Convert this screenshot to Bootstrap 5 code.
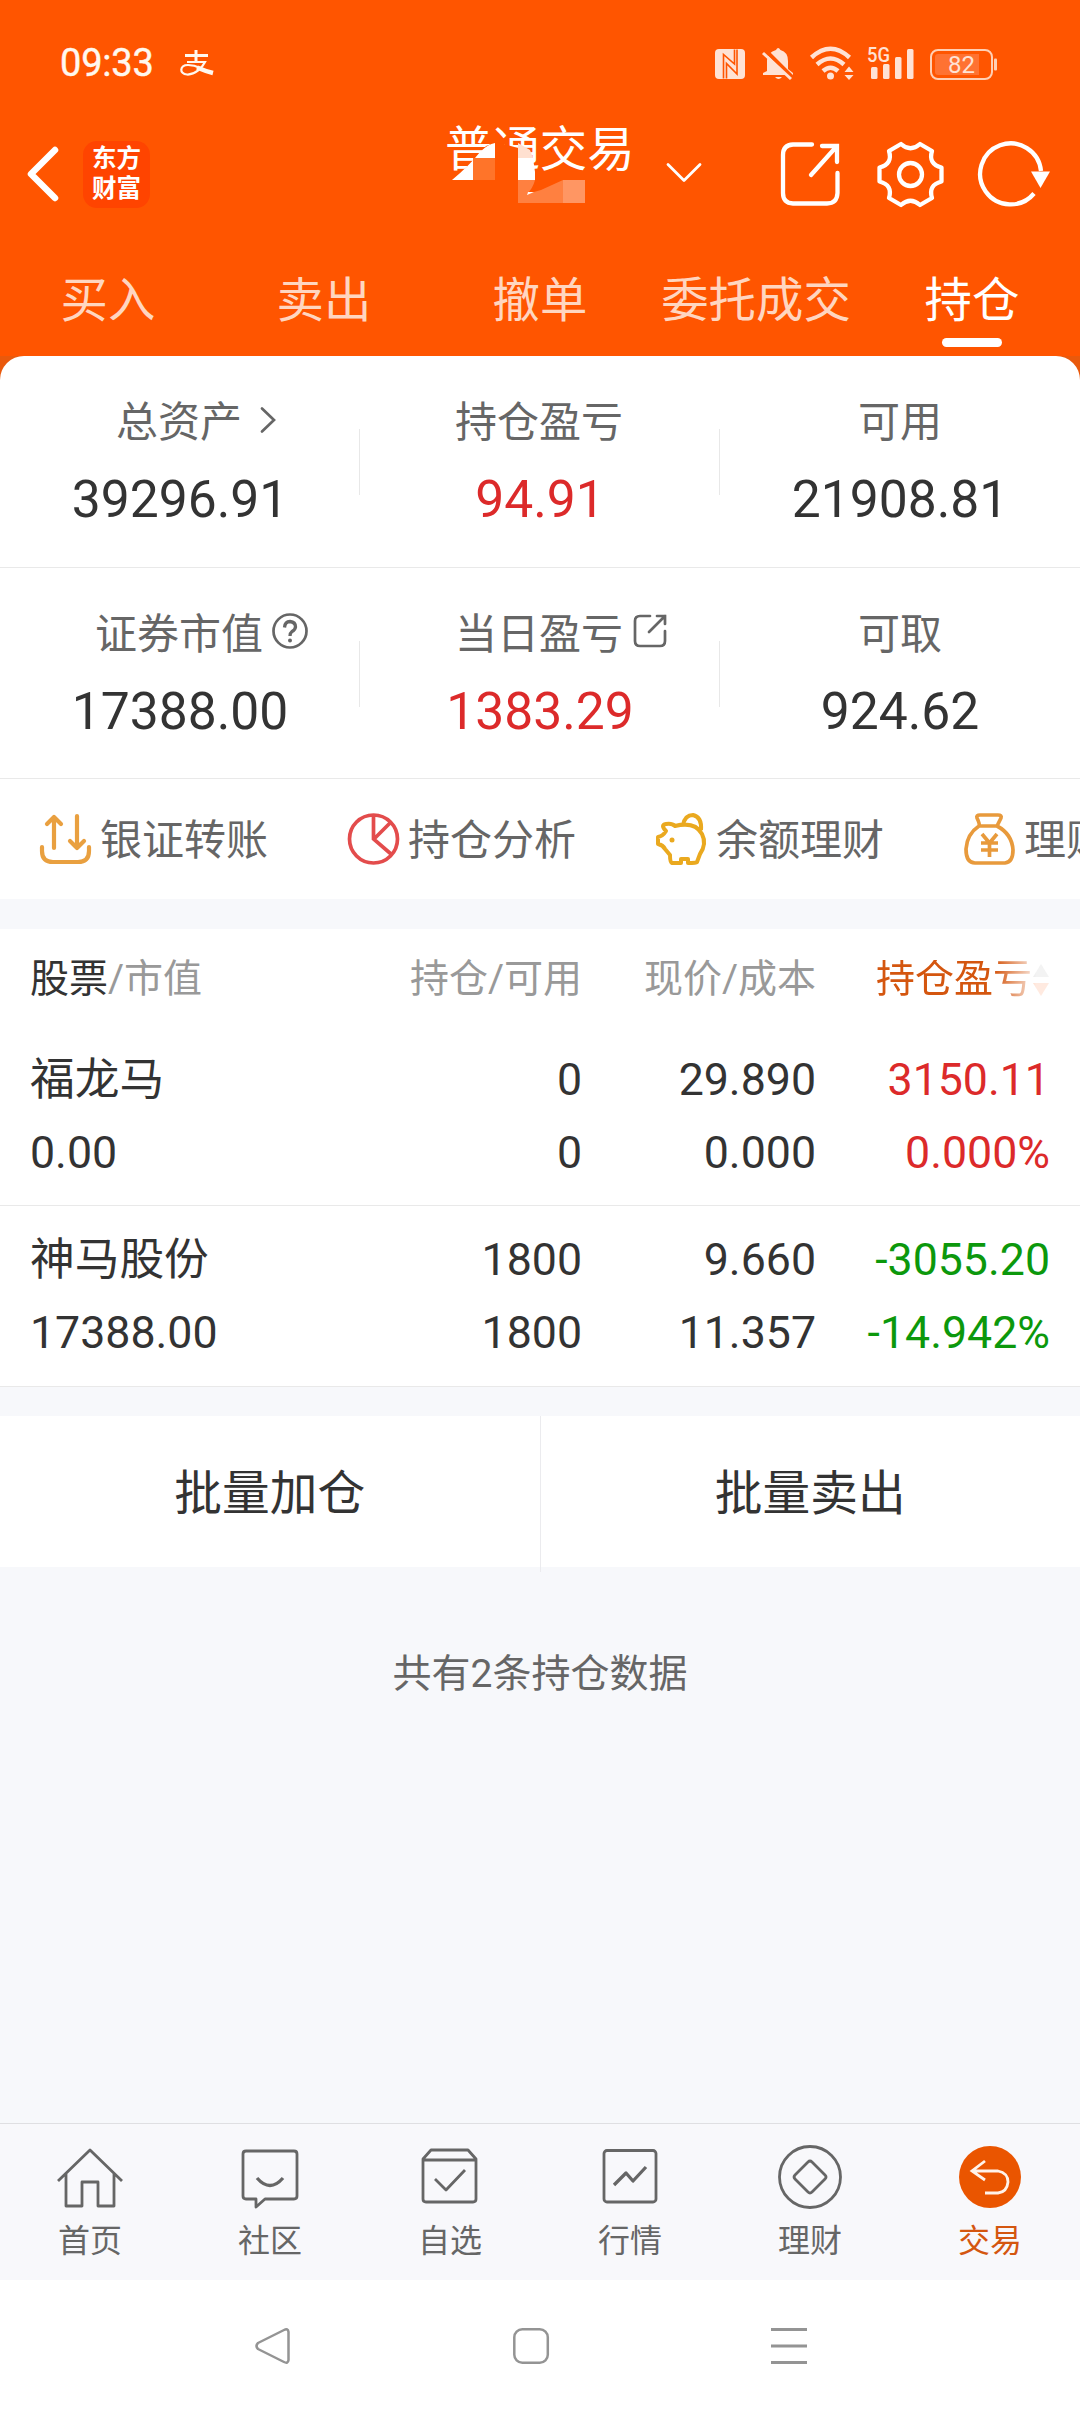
<!DOCTYPE html>
<html lang="zh-CN">
<head>
<meta charset="utf-8">
<meta name="viewport" content="width=device-width, initial-scale=1">
<title>普通交易 - 持仓</title>
<link rel="stylesheet" href="https://cdn.jsdelivr.net/npm/bootstrap@5.3.0/dist/css/bootstrap.min.css">
<style>
  body { font-family: Roboto, "Noto Sans CJK SC", sans-serif; color: #333; background: #f7f8fb; min-height: 2412px; line-height: 1; overflow-x: hidden; }
  svg { display: block; flex: none; overflow: visible; }
  .app { height: 2412px; overflow: hidden; }
  .topbar { background: #ff5500; height: 356px; color: #fff; }
  .status { height: 126px; padding: 0 84px 0 60px; }
  .clock { font-size: 38px; font-weight: 400; -webkit-text-stroke: .4px; width: 120px; letter-spacing: -.2px; color: #fff8ef; }
  .titlebar { height: 96px; padding: 0 28px 0 27px; }
  .brand-tile { width: 67px; height: 67px; border-radius: 14px; background: #ff4400; font-size: 24.5px; font-weight: 700; line-height: 30px; margin-left: 25px; }
  .title-box { width: 190px; height: 96px; font-size: 47.4px; line-height: 49px; }
  .tabs .tab { font-size: 47.4px; line-height: 159px; height: 134px; color: #ffd6c0; white-space: nowrap; }
  .tabs .tab.active { color: #fff; }
  .tab.active::after { content: ""; position: absolute; left: 50%; margin-left: -30px; bottom: 9px; width: 60px; height: 9px; border-radius: 5px; background: #fff; }
  .sheet-back { background: linear-gradient(#e9590c 0 40px, #fff 40px); }
  .sheet { background: #fff; border-radius: 24px 24px 0 0; }
  .stats { height: 211.5px; border-bottom: 1px solid #e9e9e9; }
  .stats .cell { height: 100%; padding-top: 35px; }
  .stats .cell + .cell::before { content: ""; position: absolute; left: -1px; top: 73px; height: 66px; width: 1px; background: #e8e8e8; }
  .cell-name { font-size: 42px; line-height: 63px; color: #666; }
  .cell-name > span { left: -1px; }
  .cell-num { font-size: 51.6px; line-height: 91px; }
  .hang { position: absolute; left: 100%; top: 50%; transform: translateY(calc(-50% - 3px)); }
  .up { color: #dc2a2a; }
  .down { color: #0c980c; }
  .quick { height: 120px; padding-left: 39px; font-size: 42px; color: #666; }
  .quick .item { width: 308px; gap: 8px; flex: none; white-space: nowrap; }
  .quick .item span { padding-top: 3px; }
  .band { height: 30px; background: #f7f8fb; }
  .holdings { background: #fff; padding-left: 30px; padding-right: 30px; font-size: 44.7px; text-align: right; }
  .holdings .c1 { width: 300px; text-align: left; }
  .holdings .c2 { width: 252px; }
  .holdings .c3 { width: 234px; }
  .holdings .c4 { width: 234px; white-space: nowrap; }
  .head { font-size: 39px; height: 100px; color: #999; }
  .head > div { padding-top: 1px; }
  .line-a, .line-b { line-height: 73px; }
  .hold-row { padding-top: 15px; height: 176px; }
  .hold-row.later { height: 180px; padding-top: 18px; }
  .rule { border-top: 1px solid #e9e9e9; }
  .sort-name { color: #d4560f; -webkit-mask-image: linear-gradient(90deg, #000 68%, rgba(0,0,0,.12) 92%); mask-image: linear-gradient(90deg, #000 68%, rgba(0,0,0,.12) 92%); width: 174px; }
  .batch { height: 151px; font-size: 47.7px; background: #fff; line-height: 156px; }
  .batch .half + .half { border-left: 1px solid #ebebee; }
  .note { font-size: 39px; color: #666; padding-top: 87px; line-height: 40px; }
  .dock { height: 157px; border-top: 1px solid #dfdfe2; background: #f8f8fb; font-size: 32px; color: #666; }
  .dock .slot { padding-top: 20px; }
  .dock .slot span { line-height: 42px; margin-top: 6px; }
  .dock .now { color: #d4560f; }
  .sysnav { height: 132px; background: #fff; padding: 0 273px 0 255px; }
</style>
</head>
<body>
<div class="app d-flex flex-column">
  <header class="topbar">
    <div class="status d-flex align-items-center">
      <div class="clock">09:33</div>
      <svg width="34" height="26" viewBox="0 0 34 26" fill="none" stroke="#fff8ef"><path d="M5 5.500H28M16 0V12" stroke-width="3"/><path d="M7 12H25C22 18 15 25 7 24.500C-1 24-.5 15 8 15C15 15 18 17 22 19" stroke-width="2.200"/><path d="M17 17.500Q25 21 33 23" stroke-width="4.500"/></svg>
      <svg class="ms-auto" width="281" height="38" viewBox="0 0 281 38" fill="#ffe2d4">
        <!-- nfc -->
        <rect y="5" width="30" height="30" rx="4"/>
        <path d="M8.500 34.500V10.500L19.500 20V5.500M11.500 34.500V19.500L22 30V5.500" fill="none" stroke="#ff5500" stroke-width="1.600"/>
        <!-- muted bell -->
        <path d="M52 27V16Q53 8 61 6Q63 2 65.500 6Q73 8 73 17V25L78 29V31H48V29Z"/><path d="M60 33H67Q63.500 37 60 33Z"/>
        <path d="M50 6L80 36" stroke="#ff5500" stroke-width="4"/><path d="M48 9L76 35" stroke="#ffe2d4" stroke-width="3"/>
        <!-- wifi -->
        <g fill="none" stroke="#ffe2d4" stroke-width="4.500"><path d="M96.500 13.500Q115.500-4 134.500 13.500M102 20.500Q115.500 8.500 129 20.500M108 27Q115.500 20.500 123 27"/></g>
        <circle cx="115.500" cy="32" r="3.500"/><path d="M129.500 28L134 22.500L138.500 28ZM129.500 31L134 36L138.500 31Z"/>
        <!-- signal -->
        <text x="152" y="17.500" font-size="19.500" font-weight="500" font-family="Roboto, sans-serif" textLength="23" lengthAdjust="spacingAndGlyphs">5G</text>
        <rect x="156" y="23" width="6.500" height="12" rx="1.500"/><rect x="168" y="20" width="6.500" height="15" rx="1.500"/><rect x="180" y="13" width="6.500" height="22" rx="1.500"/><rect x="192" y="5" width="6.500" height="30" rx="1.500"/>
        <!-- battery -->
        <rect x="216" y="6" width="61" height="29" rx="7" fill="none" stroke="#ffcfb4" stroke-width="2"/>
        <path d="M223 10H264V31H223Q220 31 220 28V13Q220 10 223 10Z" fill="#ff7232"/><rect x="279" y="14.500" width="3" height="12" rx="1" fill="#ffcfb4"/>
        <text x="246.500" y="29" font-size="24" text-anchor="middle" font-family="Roboto, sans-serif">82</text>
      </svg>
    </div>
    <div class="titlebar d-flex align-items-center position-relative">
      <svg width="31" height="54" viewBox="0 0 31 54" fill="none" stroke="#fff" stroke-width="6.500" stroke-linecap="round" stroke-linejoin="round"><path d="M28 3L4 27L28 51"/></svg>
      <div class="brand-tile d-flex flex-column align-items-center justify-content-center"><span>东方</span><span>财富</span></div>
      <div class="title-box position-absolute start-50 translate-middle-x">普通交易
        <svg class="position-absolute top-0 start-0" width="190" height="96" viewBox="445 126 190 96">
          <path d="M452 181L474 160L486 146L497 142L518 148V190H540V172H537V179H518V182H452Z" fill="#ff5500"/>
          <path d="M452 180Q470 165 480 152Q488 144 495 143V158H473V180Z" fill="#fff"/>
          <path d="M473 158H495V180H473Z" fill="#ff7429"/>
          <path d="M518 143L530 150L533 158H518Z" fill="#ffe0d0"/><path d="M518 158H533L535 172V180H518Z" fill="#fff"/>
          <path d="M518 180H535Q533 188 527 194L541 190L563 180V203H518Z" fill="#ff8040"/>
          <path d="M563 180H585V203H563Z" fill="#ff9663"/><path d="M528 192H534L527 195Z" fill="#fff"/>
        </svg>
      </div>
      <div class="ms-auto d-flex align-items-center">
        <svg width="36" height="20" viewBox="0 0 36 20" fill="none" stroke="#fff" stroke-width="2.800" stroke-linecap="round" stroke-linejoin="round"><path d="M2 .5L18 16.500L34 .5"/></svg>
        <svg style="margin-left:79px" width="59" height="64" viewBox="0 0 59 64" fill="none" stroke="#fff" stroke-width="4.300" stroke-linecap="round"><path d="M31 2.500H12Q2 3 2 13V51Q2 61 12 61.500H46Q56 61.500 56.500 51V31M41 4H56V20M56 4L30 33"/></svg>
        <svg style="margin-left:37px" width="67" height="67" viewBox="-33.500 -33.500 67 67" fill="none" stroke="#fff" stroke-width="4.300" stroke-linejoin="round"><path d="M31-7V7Q17.500 10.500 21.500 23.500L9.500 30.500Q0 22-9.500 30.500L-21.500 23.500Q-17.500 10.500-31 7V-7Q-17.500-10.500-21.500-23.500L-9.500-30.500Q0-22 9.500-30.500L21.500-23.500Q17.500-10.500 31-7Z"/><circle r="11.500"/></svg>
        <svg style="margin-left:35px" width="73" height="66" viewBox="0 0 73 66" fill="none" stroke="#fff" stroke-width="4.300"><path d="M55 52.500A30.500 30.500 0 1 1 62 30"/><path d="M52 30.500H71L61.500 47Z" fill="#fff" stroke="none"/></svg>
      </div>
    </div>
    <nav class="tabs row g-0 text-center">
      <div class="col tab">买入</div><div class="col tab">卖出</div><div class="col tab">撤单</div><div class="col tab">委托成交</div><div class="col tab active position-relative">持仓</div>
    </nav>
  </header>

  <div class="sheet-back">
    <section class="sheet">
      <div class="stats row g-0 text-center">
        <div class="col cell position-relative"><div class="cell-name"><span class="position-relative">总资产<svg class="hang" style="margin-left:18px" width="16" height="27" viewBox="0 0 16 27" fill="none" stroke="#666" stroke-width="2.700" stroke-linecap="round"><path d="M2 2L14 13.500L2 25"/></svg></span></div><div class="cell-num">39296.91</div></div>
        <div class="col cell position-relative"><div class="cell-name"><span class="position-relative">持仓盈亏</span></div><div class="cell-num up">94.91</div></div>
        <div class="col cell position-relative"><div class="cell-name">可用</div><div class="cell-num">21908.81</div></div>
      </div>
      <div class="stats row g-0 text-center">
        <div class="col cell position-relative"><div class="cell-name"><span class="position-relative">证券市值<svg class="hang" style="margin-left:9px" width="36" height="36" viewBox="0 0 36 36" fill="none" stroke="#666" stroke-width="2.700"><circle cx="18" cy="18" r="16.500"/><path d="M12.500 14.500Q13 8.500 18 8.500Q23.500 9 23.500 14Q23 17 20 18.500Q18 20 18 23" stroke-width="3.300"/><circle cx="18" cy="27.500" r="2" fill="#666" stroke="none"/></svg></span></div><div class="cell-num">17388.00</div></div>
        <div class="col cell position-relative"><div class="cell-name"><span class="position-relative">当日盈亏<svg class="hang" style="margin-left:10px" width="34" height="34" viewBox="0 0 34 34" fill="none" stroke="#666" stroke-width="2.700" stroke-linecap="round"><path d="M17 2H7Q2 2 2 7V27Q2 32 7 32H27Q32 32 32 27V17M24 2H32V10M32 2L16 18"/></svg></span></div><div class="cell-num up">1383.29</div></div>
        <div class="col cell position-relative"><div class="cell-name">可取</div><div class="cell-num">924.62</div></div>
      </div>
      <div class="quick d-flex align-items-center overflow-hidden">
        <div class="item d-flex align-items-center"><svg width="53" height="52" viewBox="0 0 53 52" fill="none" stroke="#e9a040" stroke-width="4.200" stroke-linecap="round" stroke-linejoin="round"><path d="M3 34V38Q3 49 14 49H39Q50 49 50 38V34M15 35V4M8 11L15 4L22 11M38 3V35M31 28L38 35L45 28"/></svg><span>银证转账</span></div>
        <div class="item d-flex align-items-center"><svg width="53" height="52" viewBox="0 0 53 52" fill="none" stroke="#e34c4c" stroke-width="3.700"><circle cx="26.500" cy="26" r="24"/><path d="M26.500 2V26L44 41M27 26L43.500 9.500"/></svg><span>持仓分析</span></div>
        <div class="item d-flex align-items-center"><svg width="53" height="52" viewBox="0 0 53 52" fill="none" stroke="#eaa91f" stroke-width="4" stroke-linejoin="round"><path d="M11 18Q5 12 11 11Q17 10 20 13Q40 8 47 21Q52 31 45 41L42 49Q41 50 33 50V46H26V50H17Q15 49 15 42L10 36Q8 32 3 31V24Q8 23 11 18ZM28 12Q30 2 38 2Q47 4 46 17"/><circle cx="17" cy="27" r="2.500" fill="#eaa91f" stroke="none"/></svg><span>余额理财</span></div>
        <div class="item d-flex align-items-center"><svg width="53" height="52" viewBox="0 0 53 52" fill="none" stroke="#e89a3c" stroke-width="3.700" stroke-linejoin="round"><path d="M16 13Q17 11 14 5Q13 2 17 2H35Q39 2 38 5L34 13ZM16 13Q4 21 3 36Q3 50 12 50H42Q50 49 50 37Q49 21 34 13M19 21L26.500 30L34 21M26.500 30V44M18 30H35M18 37H35"/></svg><span>理财</span></div>
      </div>
    </section>
  </div>
  <div class="band"></div>

  <section class="holdings">
    <div class="head d-flex align-items-center">
      <div class="c1"><span style="color:#333">股票</span>/市值</div><div class="c2">持仓/可用</div><div class="c3">现价/成本</div>
      <div class="c4 d-flex justify-content-end"><div class="sort-name d-flex align-items-center"><span>持仓盈亏</span><svg width="18" height="34" viewBox="0 0 18 34"><path d="M1 14L9 1L17 14Z" fill="#999"/><path d="M1 20L9 33L17 20Z" fill="#ff5500"/></svg></div></div>
    </div>
    <div class="hold-row">
      <div class="d-flex line-a"><div class="c1">福龙马</div><div class="c2">0</div><div class="c3">29.890</div><div class="c4 up">3150.11</div></div>
      <div class="d-flex line-b"><div class="c1">0.00</div><div class="c2">0</div><div class="c3">0.000</div><div class="c4 up">0.000%</div></div>
    </div>
  </section>
  <section class="holdings rule">
    <div class="hold-row later">
      <div class="d-flex line-a"><div class="c1">神马股份</div><div class="c2">1800</div><div class="c3">9.660</div><div class="c4 down">-3055.20</div></div>
      <div class="d-flex line-b"><div class="c1">17388.00</div><div class="c2">1800</div><div class="c3">11.357</div><div class="c4 down">-14.942%</div></div>
    </div>
  </section>
  <div class="band rule"></div>
  <div class="batch row g-0 text-center"><div class="col half">批量加仓</div><div class="col half">批量卖出</div></div>
  <div class="note text-center">共有2条持仓数据</div>

  <nav class="dock row g-0 text-center mt-auto">
    <div class="col slot d-flex flex-column align-items-center"><svg width="70" height="70" viewBox="0 0 70 70" fill="none" stroke="#666" stroke-width="2.800" stroke-linejoin="round"><path d="M3 37L35 6L67 37M11 30V62H27V38H43V62H59V30"/></svg><span>首页</span></div>
    <div class="col slot d-flex flex-column align-items-center"><svg width="70" height="70" viewBox="0 0 70 70" fill="none" stroke="#666" stroke-width="2.800" stroke-linejoin="round"><path d="M11 7H59Q62 7 62 10V52Q62 55 59 55H30L21 63V55H11Q8 55 8 52V10Q8 7 11 7Z"/><path d="M22 34Q35 49 48 34" stroke-width="3.300"/></svg><span>社区</span></div>
    <div class="col slot d-flex flex-column align-items-center"><svg width="70" height="70" viewBox="0 0 70 70" fill="none" stroke="#666" stroke-width="2.800" stroke-linejoin="round"><path d="M8 15V55Q8 58 11 58H58Q61 58 61 55V15L53 6H16ZM8 16H61M20 35L31 46L50 26"/></svg><span>自选</span></div>
    <div class="col slot d-flex flex-column align-items-center"><svg width="70" height="70" viewBox="0 0 70 70" fill="none" stroke="#666" stroke-width="2.800" stroke-linejoin="round"><rect x="9" y="6.500" width="52" height="51.500" rx="3"/><path d="M19 41L31 29L38 37L51 23" stroke-width="3.300"/></svg><span>行情</span></div>
    <div class="col slot d-flex flex-column align-items-center"><svg width="70" height="70" viewBox="0 0 70 70" fill="none" stroke="#666" stroke-width="2.800" stroke-linejoin="round"><circle cx="35" cy="33" r="30.500"/><path d="M33 18Q35 16 37 18L50 31Q52 33 50 35L37 48Q35 50 33 48L20 35Q18 33 20 31Z"/></svg><span>理财</span></div>
    <div class="col slot now d-flex flex-column align-items-center"><svg width="70" height="70" viewBox="0 0 70 70" fill="none" stroke="#fff3ea" stroke-width="2.800"><circle cx="35" cy="33" r="31" fill="#ea5500" stroke="none"/><path d="M30 17L17 27L30 36M17 27H43Q53 29 53 38Q52 48 43 49H30"/></svg><span>交易</span></div>
  </nav>
  <div class="sysnav d-flex align-items-center justify-content-between">
    <svg width="36" height="36" viewBox="0 0 36 36" fill="none" stroke="#949494" stroke-width="2.500" stroke-linejoin="round"><path d="M29 2Q33 0 33.500 4V32Q33 36 29 34L3 21Q0 18 3 15Z"/></svg>
    <svg width="36" height="36" viewBox="0 0 36 36" fill="none" stroke="#949494" stroke-width="2.500"><rect x="1.300" y="1.300" width="33.500" height="33.500" rx="8"/></svg>
    <svg width="36" height="36" viewBox="0 0 36 36" fill="none" stroke="#949494" stroke-width="2.800"><path d="M0 1.500H36M0 18H36M0 34.500H36"/></svg>
  </div>
</div>
<script src="https://cdn.jsdelivr.net/npm/bootstrap@5.3.0/dist/js/bootstrap.bundle.min.js"></script>
</body>
</html>
